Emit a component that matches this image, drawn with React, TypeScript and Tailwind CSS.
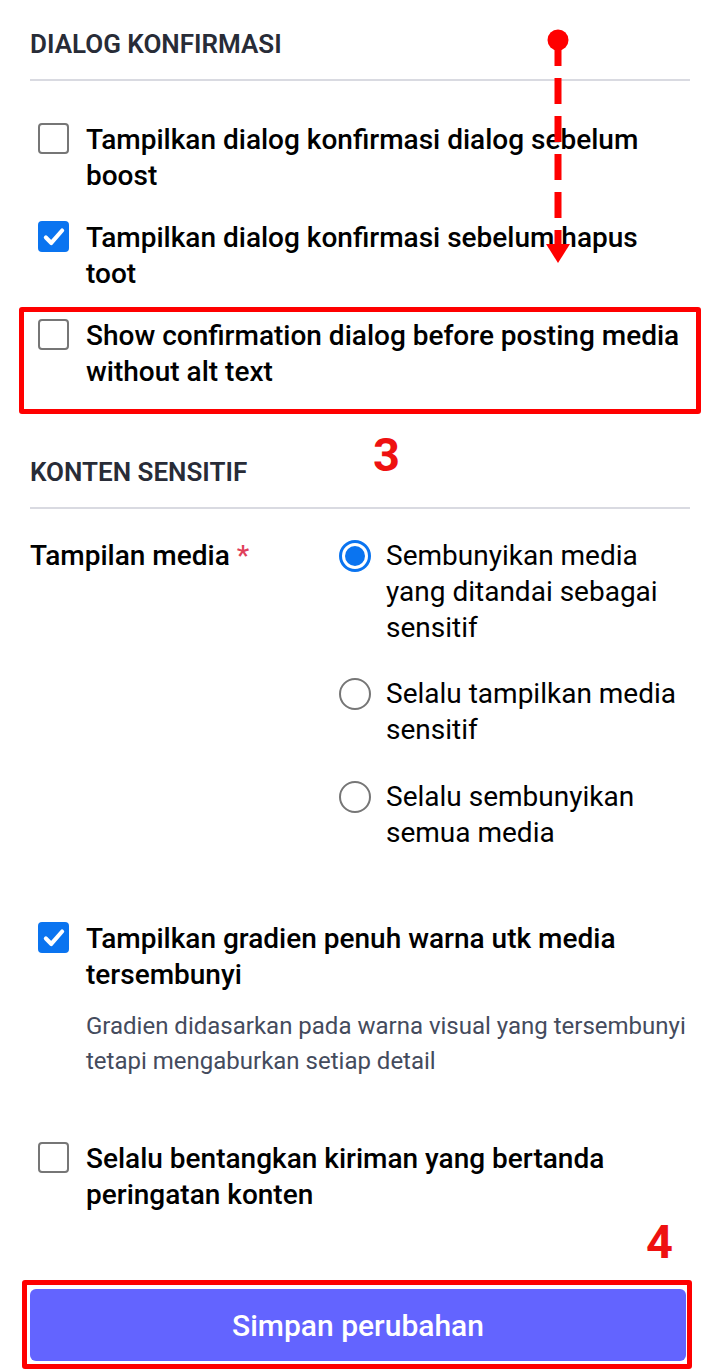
import React from "react";

const Checkbox = ({ checked }: { checked?: boolean }) =>
  checked ? (
    <span className="mt-[1px] flex h-[31px] w-[31px] shrink-0 items-center justify-center rounded-[4px] bg-[#0a74f0]">
      <svg viewBox="0 0 24 24" className="h-[26px] w-[26px]">
        <path
          d="M4.5 12.5l5 5L19.5 6"
          fill="none"
          stroke="#fff"
          strokeWidth="3.8"
          strokeLinecap="round"
          strokeLinejoin="round"
        />
      </svg>
    </span>
  ) : (
    <span className="mt-[1px] h-[31px] w-[31px] shrink-0 rounded-[4px] border-2 border-[#767676] bg-white" />
  );

const Radio = ({ checked }: { checked?: boolean }) =>
  checked ? (
    <span className="mt-[2px] flex h-[32px] w-[32px] shrink-0 items-center justify-center rounded-full border-[3px] border-[#0a74f0] bg-white">
      <span className="h-[20px] w-[20px] rounded-full bg-[#0a74f0]" />
    </span>
  ) : (
    <span className="mt-[2px] h-[32px] w-[32px] shrink-0 rounded-full border-2 border-[#767676] bg-white" />
  );

const CheckRow = ({
  checked,
  children,
  className = "",
}: {
  checked?: boolean;
  children: React.ReactNode;
  className?: string;
}) => (
  <label className={`flex items-start gap-[17px] pl-[8px] ${className}`}>
    <Checkbox checked={checked} />
    <span className="text-[28px] font-medium leading-[36px] text-black">
      {children}
    </span>
  </label>
);

const RadioRow = ({
  checked,
  children,
  className = "",
}: {
  checked?: boolean;
  children: React.ReactNode;
  className?: string;
}) => (
  <label className={`flex items-start gap-[15px] ${className}`}>
    <Radio checked={checked} />
    <span className="text-[28px] leading-[36px] text-black">{children}</span>
  </label>
);

const SectionTitle = ({ children }: { children: React.ReactNode }) => (
  <h3 className="border-b-2 border-[#d9dae1] pb-[20px] text-[26px] font-semibold leading-[30px] text-[#282c37]">
    {children}
  </h3>
);

export default function App() {
  return (
    <div className="relative min-h-[1371px] w-[720px] overflow-hidden bg-white font-['Roboto',sans-serif]">
      <div className="px-[30px] pt-[29px]">
        <SectionTitle>DIALOG KONFIRMASI</SectionTitle>

        <CheckRow className="mt-[41px]">
          Tampilkan dialog konfirmasi dialog sebelum boost
        </CheckRow>
        <CheckRow checked className="mt-[26px]">
          Tampilkan dialog konfirmasi sebelum hapus toot
        </CheckRow>
        <CheckRow className="mt-[26px]">
          Show confirmation dialog before posting media without alt text
        </CheckRow>

        <div className="mt-[67px]">
          <SectionTitle>KONTEN SENSITIF</SectionTitle>
        </div>

        <div className="mt-[29px] grid grid-cols-[309px_1fr]">
          <div className="text-[28px] font-medium leading-[36px] text-black">
            Tampilan media <span className="text-[#df405a]">*</span>
          </div>
          <div className="flex flex-col">
            <RadioRow checked>
              Sembunyikan media yang ditandai sebagai sensitif
            </RadioRow>
            <RadioRow className="mt-[30px]">
              Selalu tampilkan media sensitif
            </RadioRow>
            <RadioRow className="mt-[31px]">
              Selalu sembunyikan semua media
            </RadioRow>
          </div>
        </div>

        <CheckRow checked className="mt-[70px]">
          Tampilkan gradien penuh warna utk media tersembunyi
        </CheckRow>
        <p className="mt-[16px] pl-[56px] text-[24px] leading-[35px] text-[#444b5d]">
          Gradien didasarkan pada warna visual yang tersembunyi tetapi
          mengaburkan setiap detail
        </p>

        <CheckRow className="mt-[62px]">
          Selalu bentangkan kiriman yang bertanda peringatan konten
        </CheckRow>

        <div className="mt-[76px] pb-[9px]">
          <button className="flex h-[72px] w-[656px] items-center justify-center rounded-[6px] bg-[#6364ff] text-[30px] font-medium text-white">
            Simpan perubahan
          </button>
        </div>
      </div>

      {/* annotations */}
      <div className="pointer-events-none absolute left-[19px] top-[307px] h-[107px] w-[682px] rounded-[3px] border-[5px] border-[#ff0000]" />
      <div className="pointer-events-none absolute left-[22px] top-[1280px] h-[89px] w-[670px] rounded-[3px] border-[5px] border-[#ff0000]" />
      <span className="absolute left-[373px] top-[430px] text-[47px] font-bold leading-[50px] text-[#ee1111]">
        3
      </span>
      <span className="absolute left-[646px] top-[1217px] text-[47px] font-bold leading-[50px] text-[#ee1111]">
        4
      </span>
      <svg
        className="pointer-events-none absolute left-[538px] top-[26px]"
        width="40"
        height="240"
        viewBox="0 0 40 240"
      >
        <circle cx="20" cy="14" r="10.5" fill="#ff0000" />
        <line
          x1="20"
          y1="14"
          x2="20"
          y2="222"
          stroke="#ff0000"
          strokeWidth="7"
          strokeDasharray="26 12"
        />
        <polygon points="8,218 32,218 20,237" fill="#ff0000" />
      </svg>
    </div>
  );
}
